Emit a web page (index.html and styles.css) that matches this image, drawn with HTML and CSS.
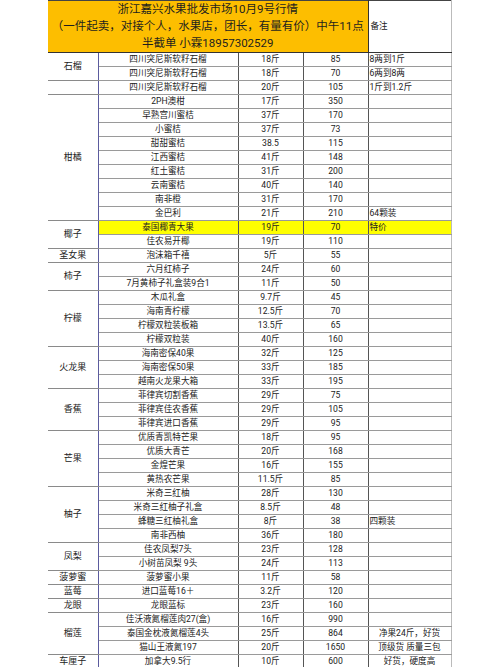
FILE: index.html
```html
<!DOCTYPE html>
<html lang="zh">
<head>
<meta charset="utf-8">
<link rel="stylesheet" href="styles.css">
</head>
<body>
<table class="sheet">
<colgroup>
<col class="c-cat"><col class="c-name"><col class="c-wt"><col class="c-price"><col class="c-note">
</colgroup>
<tr class="head">
<td colspan="4" class="title">浙江嘉兴水果批发市场10月9号行情<br>（一件起卖，对接个人，水果店，团长，有量有价）中午11点<br>半截单 小霖18957302529</td>
<td class="note-h">备注</td>
</tr>
<tr class="g"><td class="cat" rowspan="2">石榴</td><td>四川突尼斯软籽石榴</td><td>18斤</td><td>85</td><td class="note">8两到1斤</td></tr>
<tr><td>四川突尼斯软籽石榴</td><td>18斤</td><td>70</td><td class="note">6两到8两</td></tr>
<tr><td class="cat blank"></td><td>四川突尼斯软籽石榴</td><td>20斤</td><td>105</td><td class="note">1斤到1.2斤</td></tr>
<tr class="g"><td class="cat" rowspan="9">柑橘</td><td>2PH澳柑</td><td>17斤</td><td>350</td><td class="note"></td></tr>
<tr><td>早熟宫川蜜桔</td><td>37斤</td><td>170</td><td class="note"></td></tr>
<tr><td>小蜜桔</td><td>37斤</td><td>73</td><td class="note"></td></tr>
<tr><td>甜甜蜜桔</td><td>38.5</td><td>115</td><td class="note"></td></tr>
<tr><td>江西蜜桔</td><td>41斤</td><td>148</td><td class="note"></td></tr>
<tr><td>红土蜜桔</td><td>31斤</td><td>200</td><td class="note"></td></tr>
<tr><td>云南蜜桔</td><td>40斤</td><td>140</td><td class="note"></td></tr>
<tr><td>南非橙</td><td>31斤</td><td>170</td><td class="note"></td></tr>
<tr><td>金巴利</td><td>21斤</td><td>210</td><td class="note">64颗装</td></tr>
<tr class="g hl"><td class="cat" rowspan="2">椰子</td><td>泰国椰青大果</td><td>19斤</td><td>70</td><td class="note">特价</td></tr>
<tr><td>佳农易开椰</td><td>19斤</td><td>110</td><td class="note"></td></tr>
<tr class="g"><td class="cat">圣女果</td><td>泡沫箱千禧</td><td>5斤</td><td>55</td><td class="note"></td></tr>
<tr class="g"><td class="cat" rowspan="2">柿子</td><td>六月红柿子</td><td>24斤</td><td>60</td><td class="note"></td></tr>
<tr><td>7月黄柿子礼盒装9合1</td><td>11斤</td><td>50</td><td class="note"></td></tr>
<tr class="g"><td class="cat" rowspan="4">柠檬</td><td>木瓜礼盒</td><td>9.7斤</td><td>45</td><td class="note"></td></tr>
<tr><td>海南青柠檬</td><td>12.5斤</td><td>70</td><td class="note"></td></tr>
<tr><td>柠檬双粒装板箱</td><td>13.5斤</td><td>65</td><td class="note"></td></tr>
<tr><td>柠檬双粒装</td><td>40斤</td><td>160</td><td class="note"></td></tr>
<tr class="g"><td class="cat" rowspan="3">火龙果</td><td>海南密保40果</td><td>32斤</td><td>125</td><td class="note"></td></tr>
<tr><td>海南密保50果</td><td>33斤</td><td>185</td><td class="note"></td></tr>
<tr><td>越南火龙果大箱</td><td>33斤</td><td>195</td><td class="note"></td></tr>
<tr class="g"><td class="cat" rowspan="3">香蕉</td><td>菲律宾切割香蕉</td><td>29斤</td><td>75</td><td class="note"></td></tr>
<tr><td>菲律宾佳农香蕉</td><td>29斤</td><td>105</td><td class="note"></td></tr>
<tr><td>菲律宾进口香蕉</td><td>29斤</td><td>95</td><td class="note"></td></tr>
<tr class="g"><td class="cat" rowspan="4">芒果</td><td>优质青凯特芒果</td><td>18斤</td><td>95</td><td class="note"></td></tr>
<tr><td>优质大青芒</td><td>20斤</td><td>168</td><td class="note"></td></tr>
<tr><td>金煌芒果</td><td>16斤</td><td>155</td><td class="note"></td></tr>
<tr><td>黄热农芒果</td><td>11.5斤</td><td>85</td><td class="note"></td></tr>
<tr class="g"><td class="cat" rowspan="4">柚子</td><td>米奇三红柚</td><td>28斤</td><td>130</td><td class="note"></td></tr>
<tr><td>米奇三红柚子礼盒</td><td>8.5斤</td><td>48</td><td class="note"></td></tr>
<tr><td>蜂糖三红柚礼盒</td><td>8斤</td><td>38</td><td class="note">四颗装</td></tr>
<tr><td>南非西柚</td><td>36斤</td><td>180</td><td class="note"></td></tr>
<tr class="g"><td class="cat" rowspan="2">凤梨</td><td>佳农凤梨7头</td><td>23斤</td><td>128</td><td class="note"></td></tr>
<tr><td>小树苗凤梨 9头</td><td>24斤</td><td>113</td><td class="note"></td></tr>
<tr class="g"><td class="cat">菠萝蜜</td><td>菠萝蜜小果</td><td>11斤</td><td>58</td><td class="note"></td></tr>
<tr class="g"><td class="cat">蓝莓</td><td>进口蓝莓16＋</td><td>3.2斤</td><td>120</td><td class="note"></td></tr>
<tr class="g"><td class="cat">龙眼</td><td>龙眼蓝标</td><td>23斤</td><td>160</td><td class="note"></td></tr>
<tr class="g"><td class="cat" rowspan="3">榴莲</td><td>佳沃液氮榴莲肉27(盒)</td><td>16斤</td><td>990</td><td class="note"></td></tr>
<tr><td>泰国金枕液氮榴莲4头</td><td>25斤</td><td>864</td><td class="note mid">净果24斤，好货</td></tr>
<tr><td>猫山王液氮197</td><td>20斤</td><td>1650</td><td class="note mid">顶级货 质量三包</td></tr>
<tr class="g"><td class="cat">车厘子</td><td>加拿大9.5行</td><td>10斤</td><td>600</td><td class="note mid">好货，硬度高</td></tr>
</table>
</body>
</html>
```
FILE: styles.css
```css
html, body {
  margin: 0;
  padding: 0;
  background: #ffffff;
}
body {
  font-family: Roboto, "Noto Sans CJK SC", sans-serif;
  color: #222222;
}
.sheet {
  margin-left: 48px;
  width: 403px;
  table-layout: fixed;
  border-collapse: collapse;
  border-top: 1px solid #444444;
}
.c-cat { width: 50px; }
.c-name { width: 140px; }
.c-wt { width: 65px; }
.c-price { width: 65px; }
.c-note { width: 83px; }
.sheet td {
  height: 13px;
  padding: 0;
  font-size: 8.6px;
  line-height: 13px;
  text-align: center;
  white-space: nowrap;
  overflow: hidden;
  border-top: 1px solid #9a9a9a;
  border-bottom: 1px solid #9a9a9a;
  border-left: 1px solid #555555;
  border-right: 1px solid #555555;
}
.head td {
  height: 51px;
  border-bottom: 1px solid #333333;
  border-top: 1px solid #444444;
}
.sheet td.title {
  background: #fdbe00;
  font-size: 11.5px;
  line-height: 16.7px;
  color: #1e1e1e;
  border-left: none;
  border-right: 1px solid #333333;
}
.sheet td.note-h {
  text-align: left;
  padding-left: 2px;
  font-size: 8.6px;
  border-right: 1px solid #bbbbbb;
}
.sheet td.cat {
  border-left: none;
  border-right: 1px solid #5b5b9e;
  border-top: 1px solid #8a8a8a;
  border-bottom: 1px solid #8a8a8a;
  vertical-align: middle;
  font-size: 9px;
}
.sheet td.cat.blank {
  border-top: 1px solid #e6e6e6;
}
.sheet td.note {
  text-align: left;
  padding-left: 1px;
  border-right: 1px solid #bbbbbb;
}
.sheet td.note.mid {
  text-align: center;
  padding-left: 0;
}
.hl td:not(.cat) {
  background: #ffff00;
}
```
